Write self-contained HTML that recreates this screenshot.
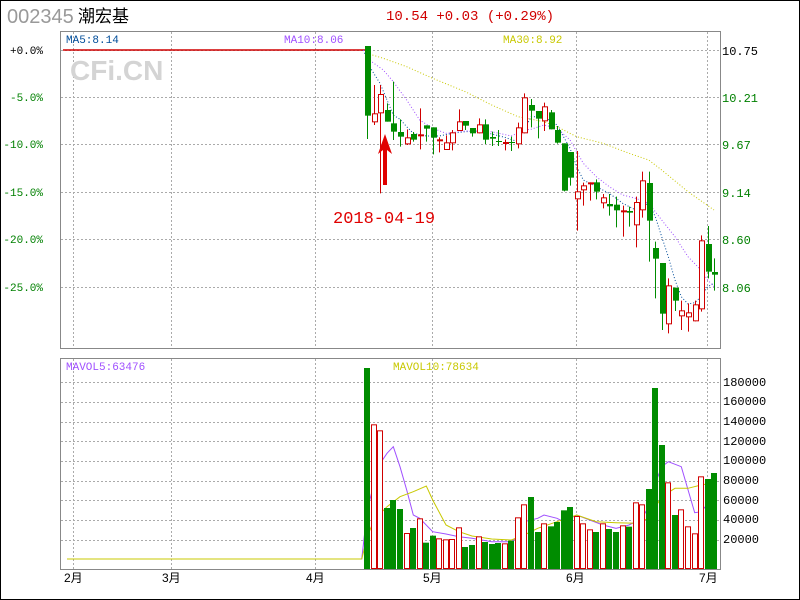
<!DOCTYPE html>
<html><head><meta charset="utf-8">
<style>
html,body{margin:0;padding:0;background:#fff}
body{width:800px;height:600px;overflow:hidden;position:relative}
svg{position:absolute;left:0;top:0}
</style></head>
<body>
<svg id="s" width="800" height="600" xmlns="http://www.w3.org/2000/svg" font-family="Liberation Mono, monospace">
<rect x="0.5" y="0.5" width="799" height="599" fill="#fff" stroke="#000"/>
<text x="7" y="23" font-family="Liberation Sans, sans-serif" font-size="20" fill="#999">002345</text>
<text x="78" y="22" font-family="Liberation Sans, 'Noto Sans CJK SC', sans-serif" font-size="17" fill="#000">潮宏基</text>
<text x="386" y="20" font-size="14" fill="#d00000">10.54 +0.03 (+0.29%)</text>
<g id="grid" stroke="#aaa" stroke-dasharray="2,2" stroke-width="1"></g>
<rect x="60.5" y="31.5" width="660" height="317" fill="none" stroke="#888"/>
<rect x="60.5" y="358.5" width="660" height="211" fill="none" stroke="#888"/>
<text x="70" y="80" font-family="Liberation Sans, sans-serif" font-weight="bold" font-size="28" fill="#d4d4d4">CFi.CN</text>
<g font-size="11">
<text x="66" y="43" fill="#004c99">MA5:8.14</text>
<text x="284" y="43" fill="#a050ff">MA10:8.06</text>
<text x="503" y="43" fill="#c8c800">MA30:8.92</text>
<text x="66" y="370" fill="#a050ff">MAVOL5:63476</text>
<text x="393" y="370" fill="#c8c800">MAVOL10:78634</text>
</g>
<g font-size="11" text-anchor="end">
<text x="43" y="54" fill="#000">+0.0%</text>
<text x="43" y="101" fill="#008000">-5.0%</text>
<text x="43" y="148" fill="#008000">-10.0%</text>
<text x="43" y="196" fill="#008000">-15.0%</text>
<text x="43" y="243" fill="#008000">-20.0%</text>
<text x="43" y="291" fill="#008000">-25.0%</text>
</g>
<g font-size="12">
<text x="722" y="55" fill="#000">10.75</text>
<text x="722" y="102" fill="#008000">10.21</text>
<text x="722" y="149" fill="#008000">9.67</text>
<text x="722" y="197" fill="#008000">9.14</text>
<text x="722" y="244" fill="#008000">8.60</text>
<text x="722" y="292" fill="#008000">8.06</text>
</g>
<g font-size="12" fill="#000">
<text x="723" y="386">180000</text><text x="723" y="405">160000</text><text x="723" y="425">140000</text>
<text x="723" y="445">120000</text><text x="723" y="464">100000</text><text x="723" y="484">80000</text>
<text x="723" y="504">60000</text><text x="723" y="523">40000</text><text x="723" y="543">20000</text>
</g>
<g font-size="12" fill="#000" font-family="Liberation Sans, 'Noto Sans CJK SC', sans-serif">
<text x="64" y="582">2月</text><text x="162" y="582">3月</text><text x="306" y="582">4月</text>
<text x="423" y="582">5月</text><text x="566" y="582">6月</text><text x="699" y="582">7月</text>
</g>
<line x1="63" y1="50" x2="365" y2="50" stroke="#d00000" stroke-width="1.5"/>
<line x1="67" y1="559" x2="362" y2="559" stroke="#c8c800"/>
<g id="ma"></g>
<g id="c"></g>
<polygon points="385,134 378,154 383,150 383,185 387,185 387,150 392,154" fill="#e00000"/>
<text x="333" y="223" font-family="Liberation Mono, monospace" font-size="17" fill="#e00000">2018-04-19</text>
</svg>
<script>
var NS="http://www.w3.org/2000/svg";
function el(p,t,a){var e=document.createElementNS(NS,t);for(var k in a)e.setAttribute(k,a[k]);document.getElementById(p).appendChild(e);}
[50,97,144,192,239,287].forEach(function(y){el("grid","line",{x1:61,x2:720,y1:y+.5,y2:y+.5});});
[382,402,422,441,461,481,500,520,540].forEach(function(y){el("grid","line",{x1:61,x2:720,y1:y+.5,y2:y+.5});});
[73,171,315,432,576,707].forEach(function(x){el("grid","line",{x1:x+.5,x2:x+.5,y1:32,y2:348});el("grid","line",{x1:x+.5,x2:x+.5,y1:359,y2:569});});
var C=[[52,'g',48,257,48,327],[72,'r',250,277,165,285],[91,'r',192,250,165,490],[111,'g',240,275,220,275],[130,'g',280,305,155,330],[150,'g',306,320,268,350],[170,'r',322,343,298,345],[190,'g',312,329,306,335],[209,'r',313,319,235,358],[229,'g',286,296,286,335],[248,'g',292,323,292,373],[268,'r',328,330,322,367],[288,'r',337,360,316,360],[307,'r',307,340,300,361],[327,'r',274,303,238,303],[346,'g',273,287,273,300],[366,'g',294,310,294,320],[386,'r',283,310,265,310],[405,'g',283,329,268,342],[425,'g',321,326,305,348],[444,'g',333,335,300,348],[464,'r',336,341,328,361],[484,'g',336,337,320,363],[504,'r',292,343,278,355],[523,'r',202,310,190,310],[543,'g',225,242,207,292],[563,'g',243,266,243,325],[582,'r',229,274,218,303],[602,'g',247,298,240,298],[621,'g',300,338,288,341],[641,'g',340,482,340,484],[660,'g',366,443,366,467],[680,'r',484,508,363,602],[700,'r',466,481,458,527],[719,'r',457,459,457,512],[739,'g',457,485,448,508],[759,'r',502,520,492,535],[778,'g',522,529,492,557],[798,'g',524,541,500,592],[818,'r',541,543,527,620],[837,'g',543,548,530,590],[857,'r',516,586,500,652],[876,'r',451,541,425,563],[896,'g',459,572,425,695],[916,'g',654,686,635,805],[935,'g',699,851,699,900],[955,'r',766,883,745,910],[975,'g',773,812,773,843],[994,'r',841,859,812,900],[1014,'r',847,862,820,905],[1034,'r',823,874,812,874],[1053,'r',631,838,616,845],[1073,'g',642,725,588,745],[1092,'g',726,734,685,782]];
var V=[54,223,241,474,450,477,549,534,505,578,557,565,568,567,532,591,585,559,576,582,579,580,572,502,463,441,546,520,529,516,481,471,498,520,538,546,520,537,546,526,530,457,463,417,114,285,397,495,478,529,550,379,387,369];
function X(z){return 350+z/3;}function Y(z){return 30+z/3;}function VY(z){return 350+z/3;}
C.forEach(function(c,i){var x=Math.round(X(c[0]));var col=c[1]=='r'?'#d00000':'#008c00';
el("c","line",{x1:x+.5,x2:x+.5,y1:Y(c[4]),y2:Y(c[5]),stroke:col});
var t=Y(c[2]),b=Y(c[3]);if(b-t<1)b=t+1;
if(c[1]=='r')el("c","rect",{x:x-2+.5,y:t+.5,width:5,height:Math.max(b-t-1,1),fill:"#fff",stroke:col});
else el("c","rect",{x:x-2,y:t,width:6,height:b-t,fill:col});
var vt=VY(V[i]);
if(c[1]=='r')el("c","rect",{x:x-2.5,y:vt+.5,width:5,height:569-vt-1,fill:"#fff",stroke:col,"stroke-width":1});
else el("c","rect",{x:x-3,y:vt,width:6,height:569-vt,fill:col});
});
function pl(pts,f,col,dash){var s=pts.map(function(p){return (350+p[0]/3).toFixed(1)+","+f(p[1]).toFixed(1);}).join(" ");
var a={points:s,fill:"none",stroke:col,"stroke-width":1};if(dash)a["stroke-dasharray"]="1,2";el("ma","polyline",a);}
pl([[40,60],[65,120],[90,160],[111,210],[130,255],[150,268],[170,290],[190,310],[229,318],[268,318],[307,310],[346,305],[386,303],[425,312],[464,322],[504,335],[523,300],[543,260],[582,260],[621,285],[660,355],[680,410],[700,450],[739,470],[778,490],[818,520],[857,540],[896,520],[916,560],[935,620],[955,680],[975,750],[994,800],[1014,822],[1034,818],[1053,800],[1073,770],[1092,760]],Y,"#004c99",1);
pl([[40,60],[65,95],[100,120],[130,155],[170,210],[209,270],[248,295],[288,310],[346,303],[425,305],[484,318],[523,300],[543,298],[582,285],[621,295],[660,330],[700,400],[739,440],[778,470],[818,495],[857,505],[896,520],[935,570],[975,620],[1014,680],[1053,720],[1073,750],[1092,770]],Y,"#a050ff",1);
pl([[50,70],[100,85],[170,110],[248,145],[346,185],[425,225],[504,260],[582,275],[621,290],[680,320],[759,340],[837,370],[896,390],[935,420],[1014,485],[1092,540]],Y,"#c8c800",1);
pl([[35,628],[52,480],[72,400],[91,340],[111,310],[130,290],[150,350],[170,420],[190,495],[209,505],[248,545],[288,552],[327,560],[366,565],[425,575],[484,575],[504,560],[523,515],[563,505],[582,495],[621,505],[641,515],[680,495],[719,510],[759,525],[798,535],[837,525],[876,505],[896,470],[916,400],[935,350],[955,335],[994,350],[1034,488],[1053,485],[1092,440]],VY,"#a050ff");
pl([[35,628],[52,560],[72,510],[111,470],[150,440],[190,425],[229,408],[248,450],[288,525],[327,545],[366,558],[425,567],[484,570],[523,555],[563,535],[621,515],[680,495],[739,515],[798,518],[857,520],[896,505],[935,440],[975,415],[1014,415],[1053,405],[1092,398]],VY,"#c8c800");
</script>
</body></html>
